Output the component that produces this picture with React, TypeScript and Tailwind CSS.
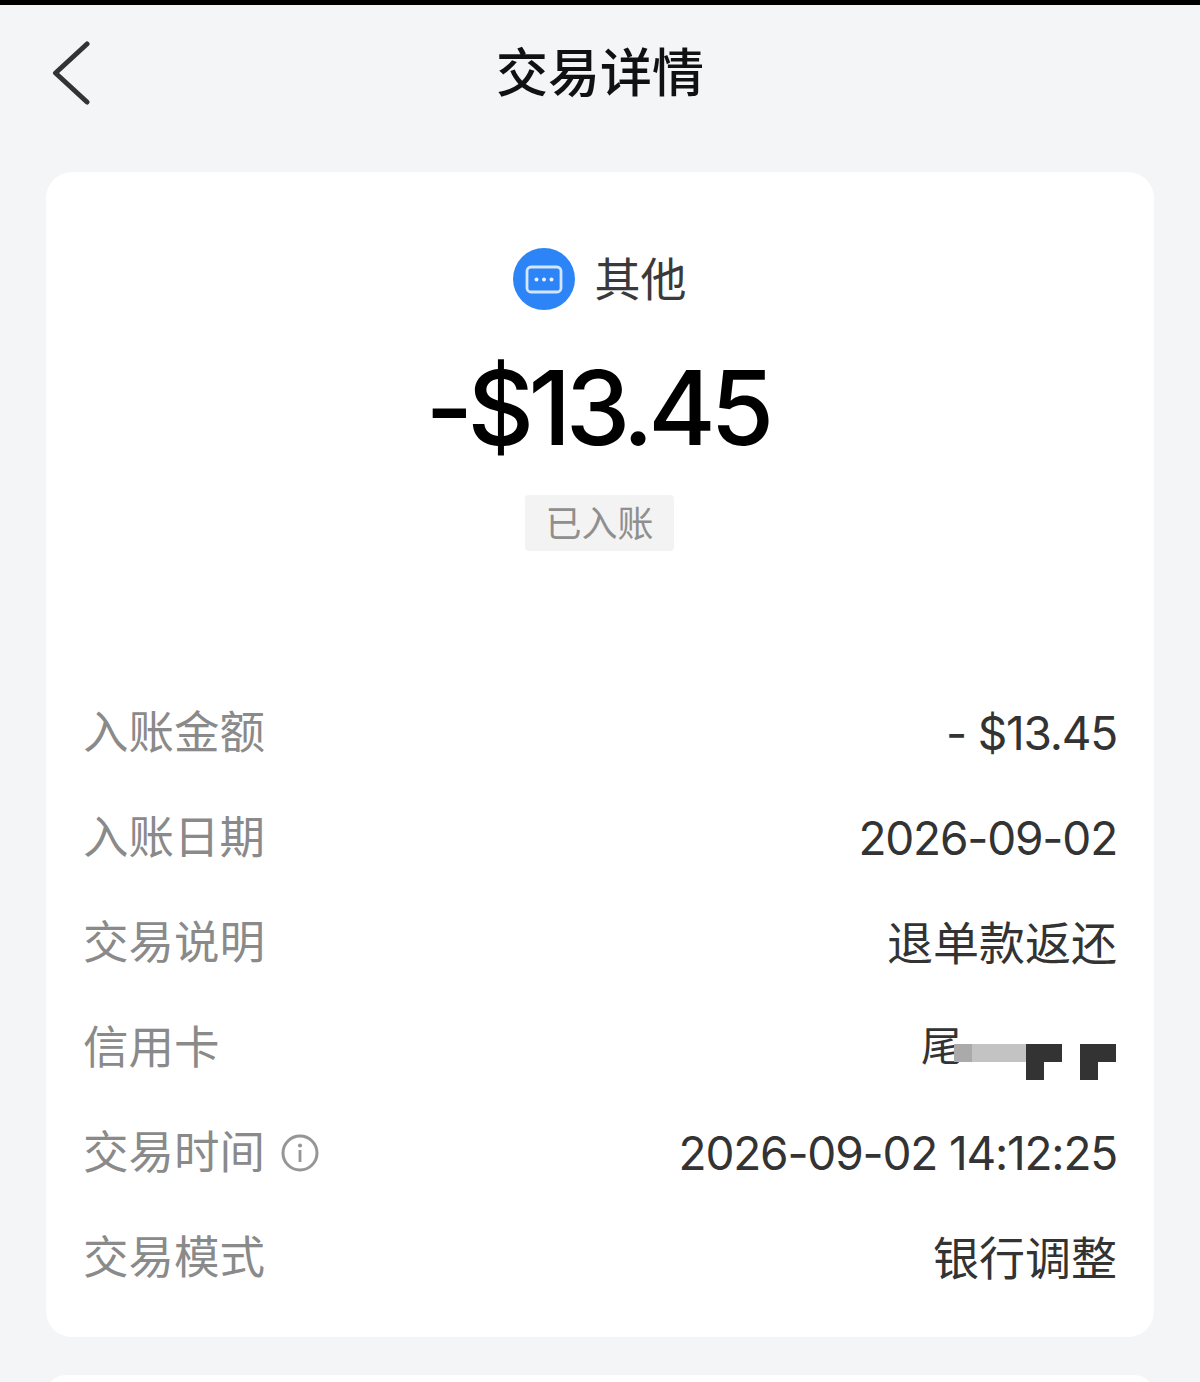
const FONT = "font-['Inter','Noto_Sans_CJK_SC',sans-serif]";

function Mosaic() {
  return (
    <svg width="162" height="36" viewBox="0 0 162 36" className="block">
      <rect x="0" y="0" width="18" height="18" fill="#aaaaaa" />
      <rect x="18" y="0" width="54" height="18" fill="#c3c3c3" />
      <path d="M72 0h36v18H90v18H72z" fill="#333333" />
      <path d="M126 0h36v18h-18v18h-18z" fill="#333333" />
    </svg>
  );
}

function Row({ label, children, info }: { label: string; children: React.ReactNode; info?: boolean }) {
  return (
    <div className="flex h-[105px] items-center justify-between pt-[1px]">
      <div className="flex items-center text-[45.5px] leading-none text-[#8a8a8a]">
        {label}
        {info && (
          <svg width="38" height="38" viewBox="0 0 38 38" className="ml-[16px]" fill="none">
            <circle cx="19" cy="19" r="17" stroke="#969696" strokeWidth="3" />
            <circle cx="19" cy="11.5" r="2.1" fill="#969696" />
            <rect x="17.6" y="16" width="2.8" height="12" fill="#969696" />
          </svg>
        )}
      </div>
      <div className="flex items-center text-[46px] leading-none text-[#333333]">{children}</div>
    </div>
  );
}

function Num({ children }: { children: React.ReactNode }) {
  return <span className="text-[46px] leading-[46px] tracking-[-1.2px]">{children}</span>;
}

export default function App() {
  return (
    <div className={`${FONT} h-[1382px] w-[1200px] overflow-hidden bg-[#f4f5f7]`}>
      <div className="h-[5px] bg-black" />
      <header className="relative flex h-[136px] items-center justify-center pt-[2px]">
        <svg width="40" height="66" viewBox="0 0 40 66" className="absolute left-[52px] top-[35px]" fill="none">
          <path d="M35 4 3.5 33 35 62" stroke="#333333" strokeWidth="5" strokeLinecap="round" strokeLinejoin="round" />
        </svg>
        <h1 className="text-[52px] font-medium leading-none text-[#111111]">交易详情</h1>
      </header>
      <main className="mx-[46px] mt-[31px] h-[1165px] rounded-[26px] bg-white px-[37px]">
        <div className="flex flex-col items-center pt-[76px]">
          <div className="mr-[1px] flex h-[62px] items-center gap-[20px]">
            <svg width="62" height="62" viewBox="0 0 62 62">
              <circle cx="31" cy="31" r="31" fill="#2d84f6" />
              <rect x="14" y="19" width="34" height="25" rx="4" fill="none" stroke="#d4e6fd" strokeWidth="2.8" />
              <circle cx="23.5" cy="31.5" r="2" fill="#e6f0fe" />
              <circle cx="31" cy="31.5" r="2" fill="#e6f0fe" />
              <circle cx="38.5" cy="31.5" r="2" fill="#e6f0fe" />
            </svg>
            <span className="text-[46px] leading-none text-[#3a3a3a]">其他</span>
          </div>
          <div className="mr-[6px] mt-[48px] h-[100px] text-[103px] font-medium leading-[100px] tracking-[-5.5px] text-black">-$13.45</div>
          <div className="mr-[1px] mt-[37px] flex h-[56px] w-[149px] items-center justify-center rounded-[4px] bg-[#f3f3f3] pt-[1px] text-[36px] leading-none text-[#8f8f8f]">
            已入账
          </div>
        </div>
        <div className="mt-[129px]">
          <Row label="入账金额"><Num>- $13.45</Num></Row>
          <Row label="入账日期"><Num>2026-09-02</Num></Row>
          <Row label="交易说明">退单款返还</Row>
          <Row label="信用卡">
            <span className="relative mr-[1px] flex items-center">
              <span className="pb-[4px] text-[41px] leading-none">尾</span>
              <span className="ml-[-8px] mt-[28px]"><Mosaic /></span>
            </span>
          </Row>
          <Row label="交易时间" info><Num>2026-09-02 14:12:25</Num></Row>
          <Row label="交易模式">银行调整</Row>
        </div>
      </main>
      <div className="mx-[46px] mt-[38px] h-[40px] rounded-[26px] bg-white" />
    </div>
  );
}
